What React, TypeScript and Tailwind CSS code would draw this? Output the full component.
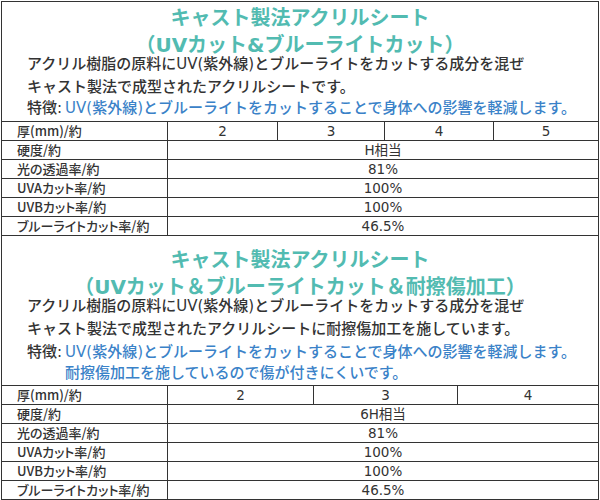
import React from "react";

const font = "font-['DejaVu_Sans','Noto_Sans_CJK_JP',sans-serif]";

function Row({ label, children, last }: { label: string; children: React.ReactNode; last?: boolean }) {
  return (
    <div className={`flex h-[19px] border-t border-[#333] ${last ? "border-b h-[20px]" : ""}`}>
      <div className="w-[165px] pl-[15px] flex items-center text-[13px] leading-[18px] [font-feature-settings:'palt'] font-['Noto_Sans_CJK_JP',sans-serif] font-medium text-[#333]">
        {label}
      </div>
      {children}
    </div>
  );
}

function Cell({ w, children }: { w?: string; children: React.ReactNode }) {
  return (
    <div className={`${w ?? "flex-1"} border-l border-[#333] flex items-center justify-center text-[13.5px] leading-[18px] text-[#333] ${font}`}>
      {children}
    </div>
  );
}

const title = "text-center text-[20px] leading-[22px] font-bold text-[#52bbb1]";
const body = "pl-[25px] text-[15px] font-medium text-[#333]";

export default function App() {
  return (
    <div className={`ml-[1px] mt-[1px] w-[598px] border border-[#333] bg-white flex flex-col ${font}`}>
      {/* Block 1 */}
      <div className={`mt-[5px] ${title}`}>キャスト製法アクリルシート</div>
      <div className={`mt-[5px] ${title}`}>（UVカット&amp;ブルーライトカット）</div>
      <div className={`${body} leading-[16px]`}>アクリル樹脂の原料にUV(紫外線)とブルーライトをカットする成分を混ぜ</div>
      <div className={`mt-[4px] ${body} leading-[23px]`}>キャスト製法で成型されたアクリルシートです。</div>
      <div className="mt-[-1px] pl-[25px] flex text-[15px] leading-[21px] font-medium">
        <span className="text-[#333] pr-[3px]">特徴:</span>
        <span className="text-[#3a82c8]">UV(紫外線)とブルーライトをカットすることで身体への影響を軽減します。</span>
      </div>
      <div className="mt-[2px] flex flex-col">
        <Row label="厚(mm)/約">
          <Cell w="w-[110px]">2</Cell>
          <Cell w="w-[107px]">3</Cell>
          <Cell w="w-[109px]">4</Cell>
          <Cell>5</Cell>
        </Row>
        <Row label="硬度/約"><Cell>H相当</Cell></Row>
        <Row label="光の透過率/約"><Cell>81%</Cell></Row>
        <Row label="UVAカット率/約"><Cell>100%</Cell></Row>
        <Row label="UVBカット率/約"><Cell>100%</Cell></Row>
        <Row label="ブルーライトカット率/約" last><Cell>46.5%</Cell></Row>
      </div>

      {/* Block 2 */}
      <div className={`mt-[13px] ${title}`}>キャスト製法アクリルシート</div>
      <div className={`mt-[5px] ${title}`}>（UVカット＆ブルーライトカット＆耐擦傷加工）</div>
      <div className={`${body} leading-[16px]`}>アクリル樹脂の原料にUV(紫外線)とブルーライトをカットする成分を混ぜ</div>
      <div className={`mt-[4px] ${body} leading-[22px]`}>キャスト製法で成型されたアクリルシートに耐擦傷加工を施しています。</div>
      <div className="mt-[2px] pl-[25px] flex text-[15px] leading-[21px] font-medium">
        <span className="text-[#333] pr-[3px]">特徴:</span>
        <div className="flex flex-col text-[#3a82c8]">
          <span>UV(紫外線)とブルーライトをカットすることで身体への影響を軽減します。</span>
          <span>耐擦傷加工を施しているので傷が付きにくいです。</span>
        </div>
      </div>
      <div className="mt-[1px] flex flex-col">
        <Row label="厚(mm)/約">
          <Cell w="w-[146px]">2</Cell>
          <Cell w="w-[144px]">3</Cell>
          <Cell>4</Cell>
        </Row>
        <Row label="硬度/約"><Cell>6H相当</Cell></Row>
        <Row label="光の透過率/約"><Cell>81%</Cell></Row>
        <Row label="UVAカット率/約"><Cell>100%</Cell></Row>
        <Row label="UVBカット率/約"><Cell>100%</Cell></Row>
        <Row label="ブルーライトカット率/約"><Cell>46.5%</Cell></Row>
      </div>
    </div>
  );
}
